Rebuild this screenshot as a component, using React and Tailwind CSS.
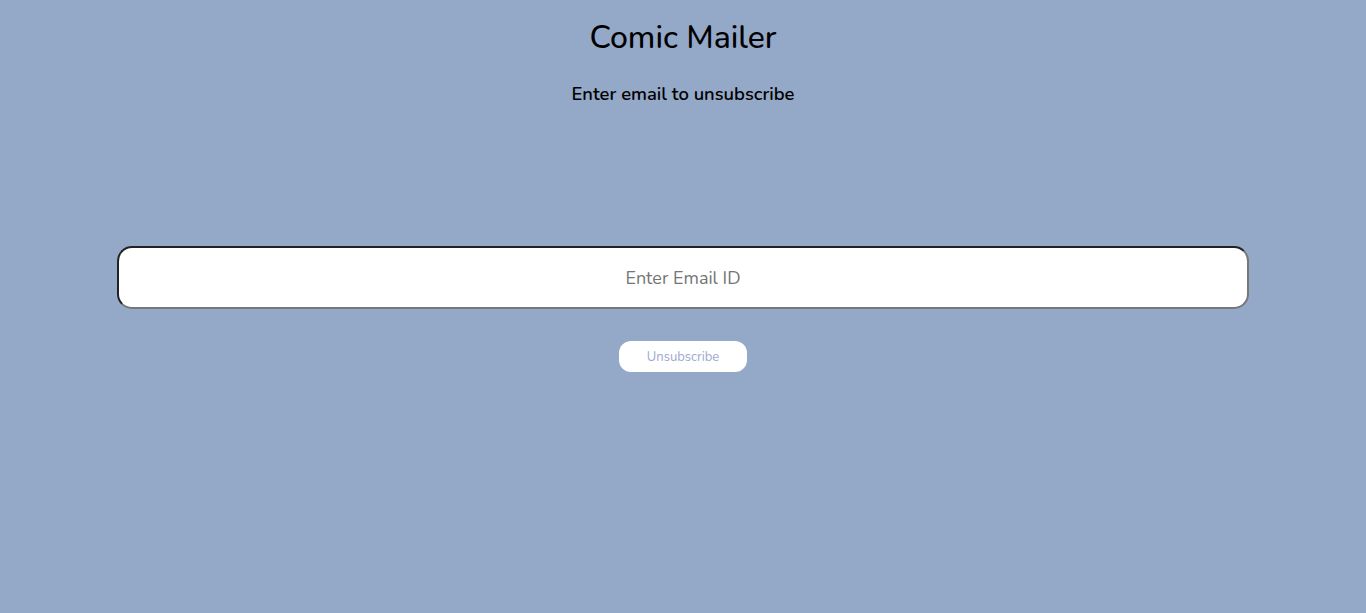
export default function App() {
  return (
    <div className="min-h-screen w-full bg-[#94a8c8] flex flex-col items-center text-black" style={{ fontFamily: '"Nunito", Lato, "Open Sans", sans-serif' }}>
      <h1 className="mt-[16px] text-[32px] leading-[44px] font-medium">Comic Mailer</h1>
      <h2 className="mt-[22px] text-[18.4px] leading-[24px] font-semibold">Enter email to unsubscribe</h2>
      <input
        type="email"
        placeholder="Enter Email ID"
        className="mt-[140px] w-[1132px] h-[63px] bg-white rounded-[15px] border-2 border-t-[#222] border-l-[#222] border-b-[#777] border-r-[#777] text-center text-[18px] text-[#555] placeholder:text-[#757575] outline-none"
      />
      <button className="mt-[32px] w-[128px] h-[31px] pt-[2px] bg-white rounded-[12px] text-[13px] text-[#9aa8d0]">
        Unsubscribe
      </button>
    </div>
  );
}
